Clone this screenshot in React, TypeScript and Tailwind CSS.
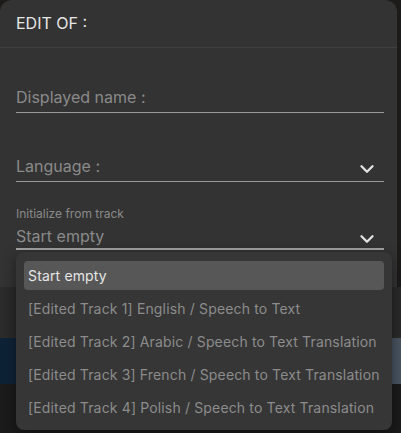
import { ChevronDown } from "lucide-react";

const tracks = [
  "Start empty",
  "[Edited Track 1] English / Speech to Text",
  "[Edited Track 2] Arabic / Speech to Text Translation",
  "[Edited Track 3] French / Speech to Text Translation",
  "[Edited Track 4] Polish / Speech to Text Translation",
];

function Chevron() {
  return (
    <ChevronDown
      size={22}
      strokeWidth={2.6}
      className="shrink-0 text-[#e2e2e2] translate-y-[3px] mr-[6px]"
    />
  );
}

export default function App() {
  return (
    <div className="w-[401px] h-[433px] bg-[#1d1b1a] flex flex-col overflow-hidden font-['Inter',sans-serif]">
      <div className="w-[397px] bg-[#333333] rounded-t-[12px] shrink-0">
        <div className="pt-[11px] pb-[12px] px-4 border-b border-[#3f3f3f] text-[16px] leading-6 font-normal text-[#e6e6e6]">
          EDIT OF :
        </div>

        <div className="pl-4 pr-[13px] pb-[37px]">
          <div className="mt-[37px] pb-[3px] border-b border-[#9a9a9a] text-[16px] leading-6 text-[#8a8a8a]">
            Displayed name :
          </div>

          <div className="mt-[41px] pb-[3px] border-b border-[#9a9a9a] flex items-center justify-between text-[16px] leading-6 text-[#8a8a8a]">
            <span>Language :</span>
            <Chevron />
          </div>

          <div className="mt-[24px] text-[12px] leading-4 text-[#8a8a8a]">Initialize from track</div>
          <div className="relative mt-[2px]">
            <div className="border-b-2 border-[#a3a3a3] flex items-center justify-between text-[16px] leading-6 text-[#8a8a8a]">
              <span>Start empty</span>
              <Chevron />
            </div>

            <ul className="absolute left-0 right-[-8px] top-full mt-[2px] z-10 bg-[#363636] rounded-[8px] shadow-[0_4px_14px_rgba(0,0,0,0.45)] pt-[9px] pb-[8px] px-[8px] flex flex-col gap-1">
              {tracks.map((t, i) => (
                <li
                  key={t}
                  className={
                    i === 0
                      ? "h-[29px] flex items-center px-1 rounded-[4px] bg-[#575757] text-[14px] tracking-[0.15px] text-[#e6e6e6] whitespace-nowrap"
                      : "h-[29px] flex items-center px-1 rounded-[4px] text-[14px] tracking-[0.15px] text-[#8c8c8c] whitespace-nowrap"
                  }
                >
                  {t}
                </li>
              ))}
            </ul>
          </div>
        </div>
      </div>

      {/* player area behind the dialog */}
      <div className="h-[51px] bg-[#2b2b2b] shrink-0" />
      <div className="h-[46px] bg-gradient-to-r from-[#0e2236] via-[#1d3346] to-[#4a5562] shrink-0" />
      <div className="flex-1 bg-[#1b1b1b]" />
    </div>
  );
}
